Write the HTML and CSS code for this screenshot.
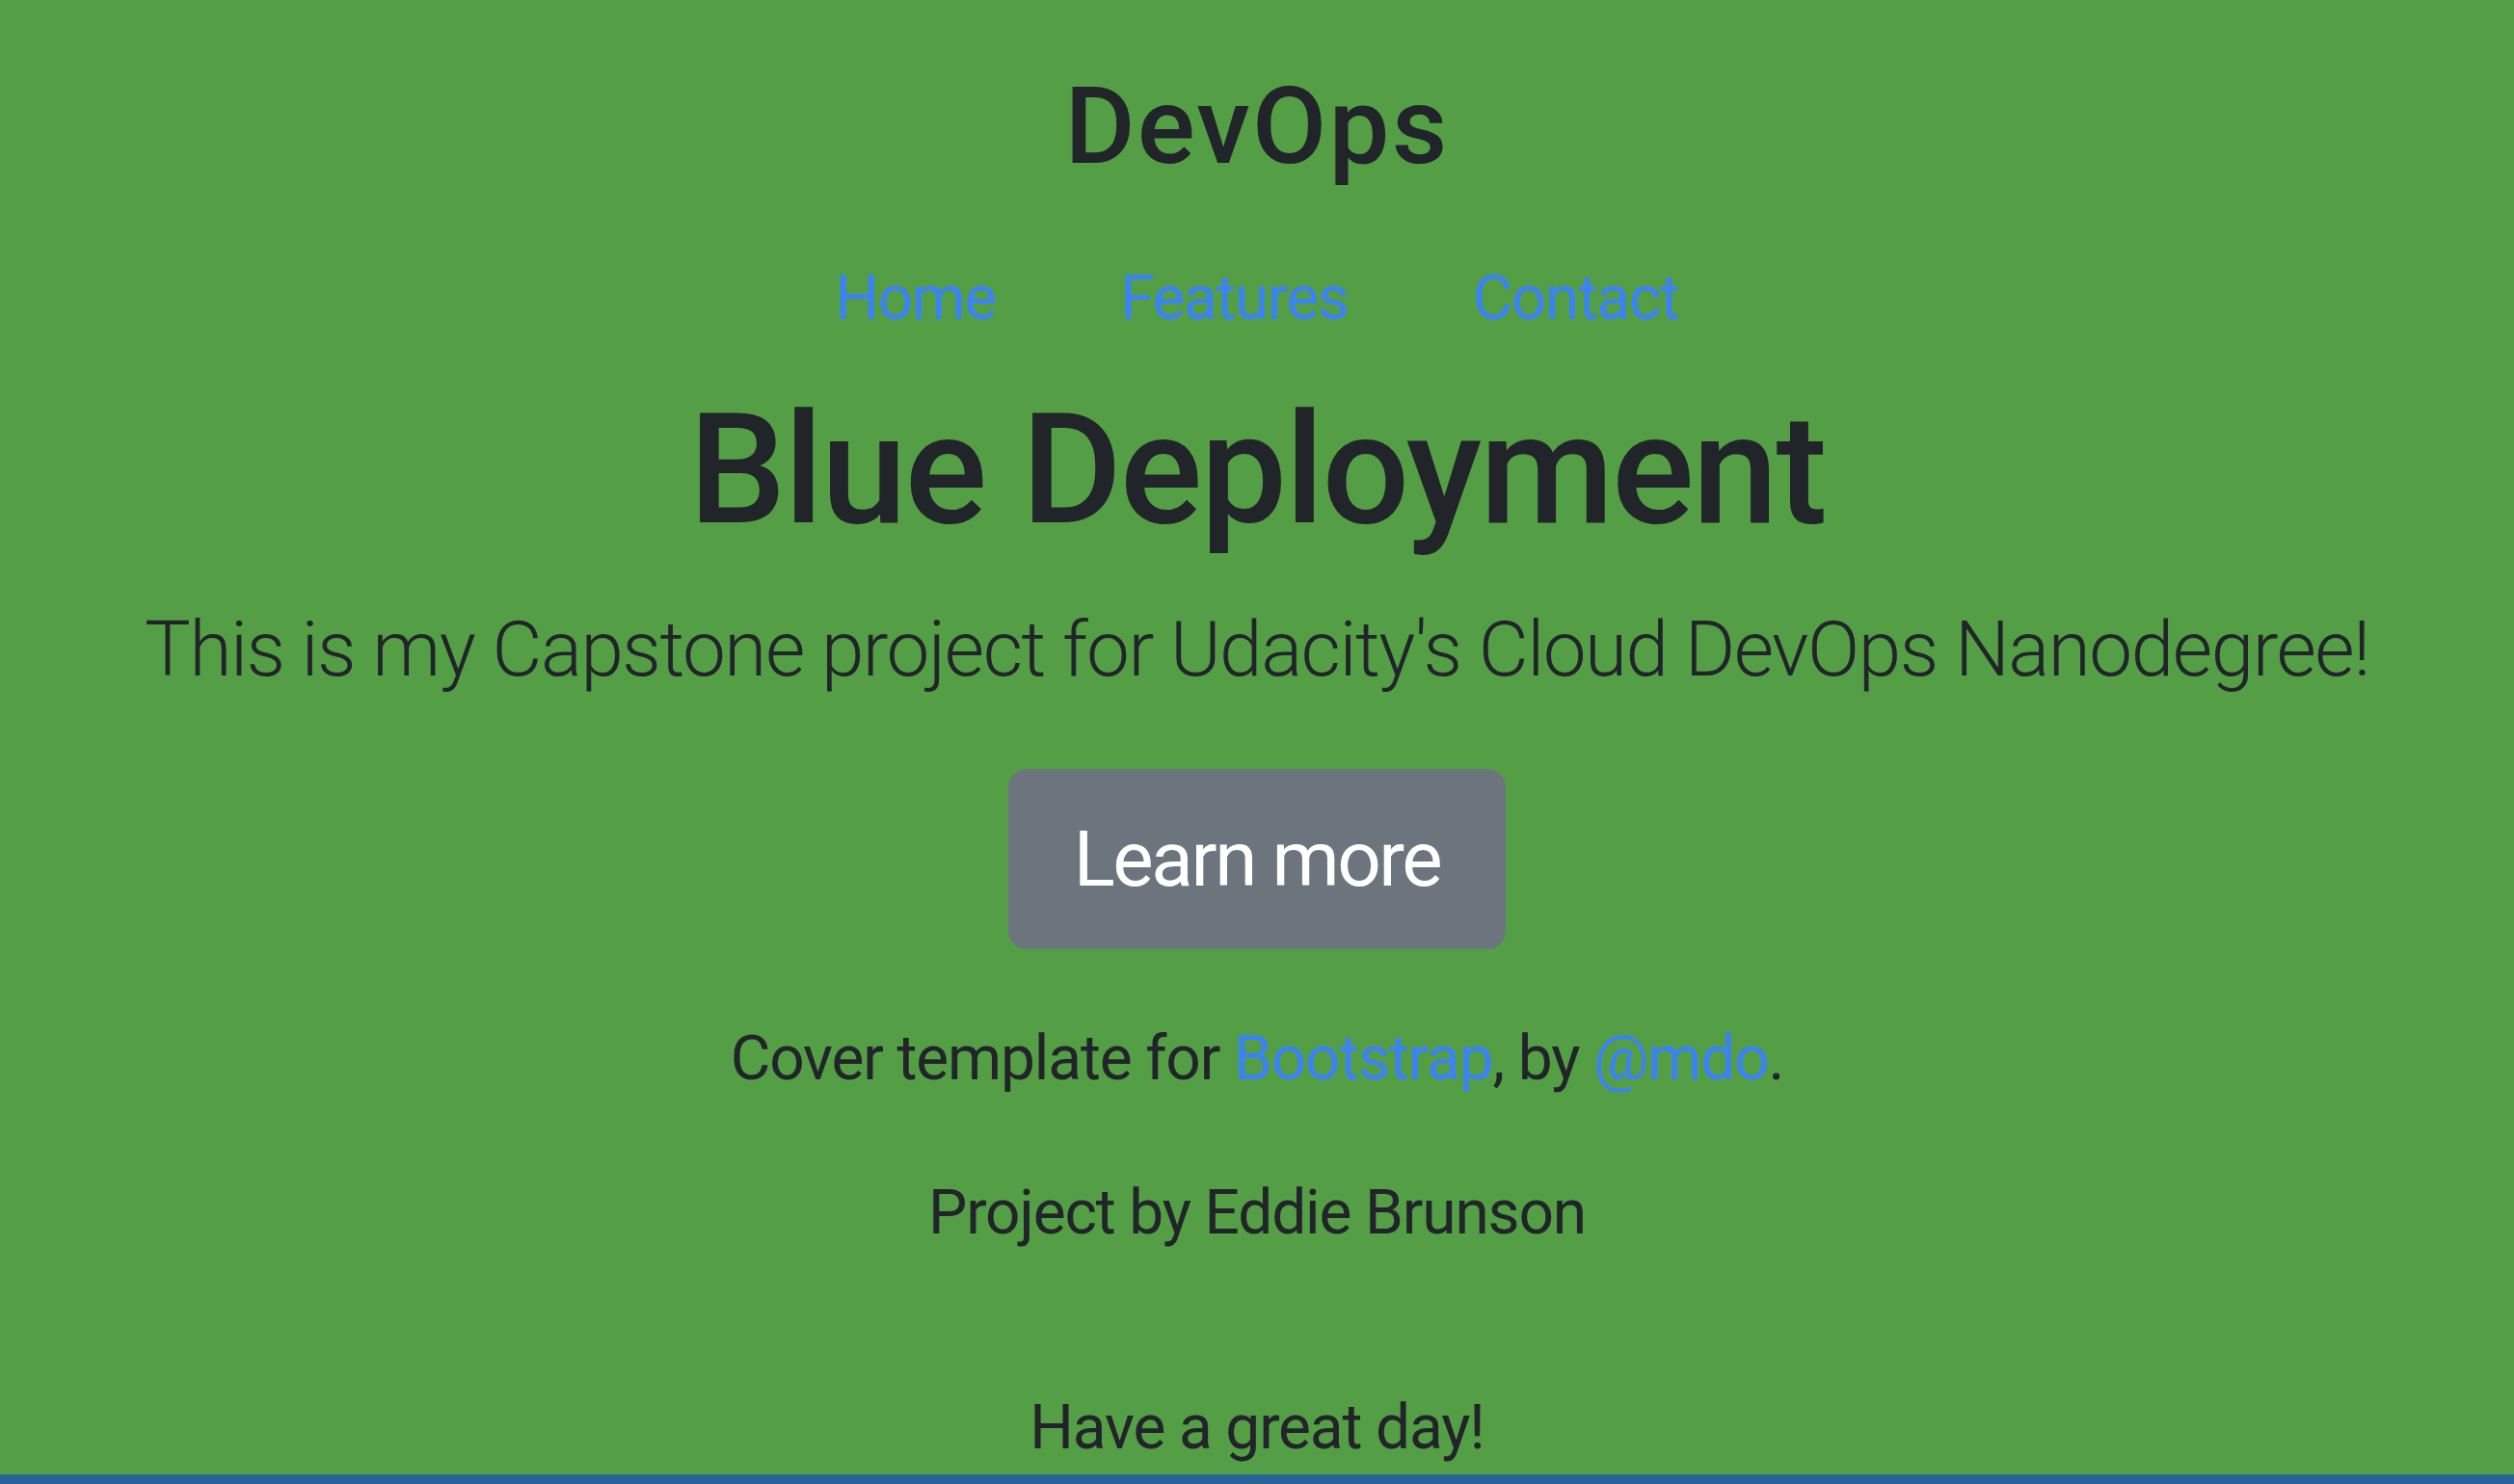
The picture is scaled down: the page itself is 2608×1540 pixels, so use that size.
FILE: index.html
```html
<!DOCTYPE html>
<html lang="en">
<head>
<meta charset="utf-8">
<title>DevOps</title>
<link rel="stylesheet" href="styles.css">
</head>
<body>
<div class="cover">
  <header class="masthead">
    <h3 class="brand">DevOps</h3>
    <nav class="nav">
      <a class="nav-link" href="#">Home</a>
      <a class="nav-link" href="#">Features</a>
      <a class="nav-link" href="#">Contact</a>
    </nav>
  </header>
  <main class="inner">
    <h1 class="heading">Blue Deployment</h1>
    <p class="lead">This is my Capstone project for Udacity's Cloud DevOps Nanodegree!</p>
    <a class="btn" href="#">Learn more</a>
  </main>
  <footer class="footer">
    <p class="credit">Cover template for <a href="#">Bootstrap</a>, by <a href="#">@mdo</a>.</p>
    <p class="author">Project by Eddie Brunson</p>
    <p class="bye">Have a great day!</p>
  </footer>
</div>
<div class="bar"></div>
</body>
</html>
```
FILE: styles.css
```css
html, body {
  margin: 0;
  padding: 0;
}
body {
  background: #549f45;
  color: #212529;
  font-family: Roboto, "Liberation Sans", sans-serif;
  text-align: center;
}
.cover {
  display: flex;
  flex-direction: column;
  align-items: center;
}
.masthead {
  display: flex;
  flex-direction: column;
  align-items: center;
}
.brand {
  margin: 64px 0 0;
  font-size: 112px;
  font-weight: 500;
  line-height: 1.2;
  letter-spacing: 0.02em;
}
.nav {
  margin-top: 64px;
  display: flex;
  gap: 129px;
}
.nav-link {
  font-size: 64px;
  line-height: 1.5;
  color: #3b82f6;
  text-decoration: none;
  letter-spacing: -0.022em;
}
.inner {
  display: flex;
  flex-direction: column;
  align-items: center;
}
.heading {
  margin: 34px 0 0;
  font-size: 160px;
  font-weight: 500;
  line-height: 1.2;
  letter-spacing: -0.014em;
}
.lead {
  margin: 30px 0 0;
  font-size: 80px;
  font-weight: 300;
  line-height: 1.5;
  letter-spacing: -0.018em;
}
.btn {
  margin-top: 64px;
  display: inline-block;
  background: #6c757d;
  border: 4px solid #6c757d;
  border-radius: 19px;
  color: #fff;
  font-size: 80px;
  line-height: 1.5;
  letter-spacing: -0.03em;
  padding: 29.5px 64px;
  text-decoration: none;
}
.footer {
  display: flex;
  flex-direction: column;
  align-items: center;
}
.footer p {
  margin: 0;
  font-size: 64px;
  line-height: 1.5;
  letter-spacing: -0.018em;
}
.footer a {
  color: #3b82f6;
  text-decoration: none;
}
.credit {
  padding-top: 65.7px;
}
.author {
  padding-top: 64px;
}
.bye {
  padding-top: 127px;
}
.bar {
  height: 10px;
  background: #2a6398;
}
```
